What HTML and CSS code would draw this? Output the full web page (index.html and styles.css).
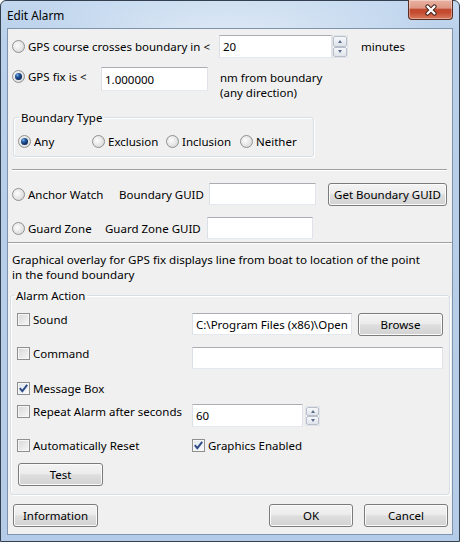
FILE: index.html
```html
<!DOCTYPE html>
<html>
<head>
<meta charset="utf-8">
<title>Edit Alarm</title>
<link rel="stylesheet" href="styles.css">
</head>
<body>
<div class="window">
  <div class="titlebar">
    <span class="title">Edit Alarm</span>
    <span class="close"><svg width="16" height="12" viewBox="0 0 16 12"><path d="M4.5 2.5 L11.5 9.5 M11.5 2.5 L4.5 9.5" stroke="#3b1c16" stroke-width="4.2" stroke-linecap="round"/><path d="M4.5 2.5 L11.5 9.5 M11.5 2.5 L4.5 9.5" stroke="#ffffff" stroke-width="2.4" stroke-linecap="round"/></svg></span>
  </div>
  <div class="client">
    <div class="top">
      <div class="row r1">
        <span class="opt w207"><span class="radio"></span>GPS course crosses boundary in &lt;</span>
        <input class="input w113" type="text" value="20" readonly>
        <span class="spin"><span class="sbtn up"></span><span class="sbtn dn"></span></span>
        <span class="unit">minutes</span>
      </div>
      <div class="row r2">
        <span class="opt w89 fix"><span class="radio on"></span>GPS fix is &lt;</span>
        <input class="input w107 h24" type="text" value="1.000000" readonly>
        <span class="note">nm from boundary<br>(any direction)</span>
      </div>
      <fieldset class="group gb">
        <legend>Boundary Type</legend>
        <div class="radios">
          <span class="opt w74"><span class="radio on"></span>Any</span>
          <span class="opt w74"><span class="radio"></span>Exclusion</span>
          <span class="opt w74"><span class="radio"></span>Inclusion</span>
          <span class="opt"><span class="radio"></span>Neither</span>
        </div>
      </fieldset>
      <div class="sep short"></div>
      <div class="row r3">
        <span class="opt w107"><span class="radio"></span>Anchor Watch</span>
        <span class="lbl w90">Boundary GUID</span>
        <input class="input w107 h22" type="text" value="" readonly>
        <span class="btn guid">Get Boundary GUID</span>
      </div>
      <div class="row r4">
        <span class="opt w93"><span class="radio"></span>Guard Zone</span>
        <span class="lbl w102">Guard Zone GUID</span>
        <input class="input w106 h22" type="text" value="" readonly>
      </div>
    </div>
    <div class="sep full"></div>
    <p class="info">Graphical overlay for GPS fix displays line from boat to location of the point<br>in the found boundary</p>
    <fieldset class="group ga">
      <legend>Alarm Action</legend>
      <div class="arow sound">
        <span class="chk w175"><span class="box"></span>Sound</span>
        <input class="input w160 h22" type="text" value="C:\Program Files (x86)\OpenCPN\sounds\beep_ssl.wav" readonly>
        <span class="btn browse">Browse</span>
      </div>
      <div class="arow cmd">
        <span class="chk w175"><span class="box"></span>Command</span>
        <input class="input w251 h22" type="text" value="" readonly>
      </div>
      <div class="arow msg">
        <span class="chk"><span class="box on"><svg width="11" height="11" viewBox="0 0 11 11"><path d="M1.8 5.2 L4.3 8.2 L9.2 1.8" fill="none" stroke="#2d4a86" stroke-width="1.9"/></svg></span>Message Box</span>
      </div>
      <div class="arow rep">
        <span class="chk w175 flat"><span class="box"></span>Repeat Alarm after seconds</span>
        <input class="input w111 h23" type="text" value="60" readonly>
        <span class="spin small"><span class="sbtn up"></span><span class="sbtn dn"></span></span>
      </div>
      <div class="arow auto">
        <span class="chk w175 flat"><span class="box"></span>Automatically Reset</span>
        <span class="chk flat"><span class="box on"><svg width="11" height="11" viewBox="0 0 11 11"><path d="M1.8 5.2 L4.3 8.2 L9.2 1.8" fill="none" stroke="#2d4a86" stroke-width="1.9"/></svg></span>Graphics Enabled</span>
      </div>
      <span class="btn test">Test</span>
    </fieldset>
    <div class="footer">
      <span class="btn w85">Information</span>
      <span class="right">
        <span class="btn w84">OK</span>
        <span class="btn w84">Cancel</span>
      </span>
    </div>
  </div>
</div>
</body>
</html>
```
FILE: styles.css
```css
* { box-sizing: border-box; }
html, body { margin: 0; padding: 0; }
body {
  width: 460px;
  height: 542px;
  overflow: hidden;
  background: #ffffff;
  font-family: "Noto Sans", "Open Sans", sans-serif;
  font-size: 11.5px;
  line-height: 15px;
  color: #000;
}
.window {
  width: 460px;
  height: 542px;
  display: flex;
  flex-direction: column;
  padding: 0 6px 6px 6px;
  border: 1px solid #34404f;
  border-radius: 6px 6px 0 0;
  background:
    radial-gradient(ellipse 220px 70px at 50% 45px, rgba(255,255,255,0.6), rgba(255,255,255,0) 100%),
    linear-gradient(#c3d8ef, #b9d0ea 40px, #b4cce7);
}
.titlebar {
  height: 27px;
  display: flex;
  align-items: flex-start;
  justify-content: space-between;
  flex: none;
}
.title {
  margin-top: 7px;
  font-size: 11.8px;
}
.close {
  width: 45px;
  height: 20px;
  margin-top: -1px;
  border: 1px solid #5b2d22;
  border-top: none;
  border-radius: 0 0 4px 4px;
  display: flex;
  align-items: center;
  justify-content: center;
  background: linear-gradient(#e8b2a2 0%, #de9885 42%, #c24c31 50%, #c44a2e 65%, #d9795d 100%);
  box-shadow: inset 0 0 0 1px rgba(255,255,255,0.35);
}
.client {
  flex: 1;
  display: flex;
  flex-direction: column;
  border: 1px solid #7e93ad;
  background: #f0f0f0;
}
.top { padding: 0 4px; display: flex; flex-direction: column; }
.row { display: flex; }
.r1 { margin-top: 6px; height: 23px; align-items: center; }
.r2 { margin-top: 9px; align-items: flex-start; }
.r3 { margin-top: 11px; height: 24px; align-items: center; }
.r4 { margin-top: 10px; height: 24px; align-items: center; }

.opt, .chk { display: inline-flex; align-items: center; height: 15px; white-space: nowrap; flex: none; }
.fix { margin-top: 2px; }
.note { margin-left: 12px; margin-top: 3px; white-space: nowrap; }
.unit { margin-left: 13px; }
.lbl { white-space: nowrap; flex: none; }

.w74 { width: 74px; }
.w84 { width: 84px; }
.w85 { width: 85px; }
.w89 { width: 89px; }
.w90 { width: 90px; }
.w93 { width: 93px; }
.w102 { width: 102px; }
.w106 { width: 106px; }
.w107 { width: 107px; }
.w111 { width: 111px; }
.w113 { width: 113px; }
.w160 { width: 160px; }
.w175 { width: 175px; }
.w207 { width: 207px; }
.w251 { width: 251px; }

.radio {
  width: 13px;
  height: 13px;
  margin-right: 3px;
  border-radius: 50%;
  border: 1px solid #8f9190;
  background: radial-gradient(circle at 40% 40%, #fdfdfd 0%, #e9e9e9 45%, #cfcfcf 100%);
  display: inline-flex;
  align-items: center;
  justify-content: center;
  flex: none;
}
.radio.on::after {
  content: "";
  width: 7px;
  height: 7px;
  border-radius: 50%;
  background: radial-gradient(circle at 35% 30%, #7fb4e6 0%, #24599f 30%, #0e2f63 65%, #08204a 100%);
}

.box {
  width: 13px;
  height: 13px;
  margin-right: 3px;
  border: 1px solid #8e8f8f;
  background: linear-gradient(135deg, #d6d6d6, #f8f8f8);
  box-shadow: inset 0 0 0 1px #f6f6f6;
  display: inline-flex;
  align-items: center;
  justify-content: center;
  flex: none;
}
.box.on { background: linear-gradient(135deg, #dfe6ef, #fbfbfb); }

.input {
  display: block;
  height: 23px;
  margin: 0;
  padding: 0 3px;
  background: #fff;
  border: 1px solid;
  border-color: #abadb3 #e2e3ea #e3e9ef #dbdfe6;
  border-radius: 0;
  font: inherit;
  color: #000;
  outline: none;
  flex: none;
}
.h22 { height: 22px; }
.h23 { height: 23px; }
.h24 { height: 24px; }

.spin {
  width: 16px;
  height: 23px;
  display: flex;
  flex-direction: column;
  border: 1px solid #dfe3e8;
  background: #fff;
  flex: none;
}
.spin.small { width: 15px; height: 20px; margin-left: 2px; margin-top: 2px; }
.sbtn {
  flex: 1;
  display: flex;
  align-items: center;
  justify-content: center;
  border: 1px solid #b8bfca;
  border-radius: 2px;
  background: linear-gradient(#f6f8fa, #dfe4eb);
}
.sbtn::before {
  content: "";
  width: 0;
  height: 0;
  border-left: 2.5px solid transparent;
  border-right: 2.5px solid transparent;
}
.sbtn.up::before { border-bottom: 3px solid #5c6d8a; }
.sbtn.dn::before { border-top: 3px solid #5c6d8a; }

.btn {
  height: 23px;
  display: inline-flex;
  align-items: center;
  justify-content: center;
  border: 1px solid #7b7b7b;
  border-radius: 3px;
  background: linear-gradient(#f3f3f3 0%, #ececec 45%, #dedede 52%, #d2d2d2 100%);
  box-shadow: inset 0 0 0 1px #fbfbfb;
  white-space: nowrap;
  flex: none;
}
.guid { width: 119px; margin-left: 12px; }
.browse { width: 85px; margin-left: 6px; }
.test { width: 85px; margin-left: 1px; margin-top: 10px; }

.group {
  margin: 0;
  min-width: 0;
  border: 1px solid #d5dfe5;
  border-radius: 3px;
  box-shadow: inset 1px 1px 0 #ffffff, 1px 1px 0 #ffffff;
}
.group legend { padding: 0 2px; line-height: 15px; }
.gb {
  margin: 10px 0 0 1px;
  width: 301px;
  padding: 9px 4px 7px 4px;
}
.gb legend { margin-left: 1px; }
.radios { display: flex; height: 15px; align-items: center; }

.sep { height: 2px; border-top: 1px solid #a0a0a0; border-bottom: 1px solid #ffffff; flex: none; }
.sep.short { width: 435px; margin-top: 12px; }
.sep.full { margin-top: 2px; }

.info { margin: 8px 0 0 0; padding-left: 4px; white-space: nowrap; font-size: 11.6px; }

.ga {
  margin: 6px 0 0 2px;
  width: 440px;
  padding: 10px 6px 8px 6px;
  display: flex;
  flex-direction: column;
  align-items: flex-start;
}
.ga legend { margin-left: -3px; }
.arow { display: flex; align-items: flex-start; }
.arow .chk { margin-top: -1px; }
.arow .chk.flat { margin-top: 0; }
.sound { height: 23px; }
.cmd { margin-top: 11px; }
.msg { margin-top: 12px; }
.msg .chk { margin-top: 0; }
.rep { margin-top: 8px; }
.auto { margin-top: 11px; }

.footer {
  margin-top: 9px;
  height: 23px;
  padding: 0 4px 0 5px;
  display: flex;
  justify-content: space-between;
}
.right { display: flex; gap: 11px; }
```
